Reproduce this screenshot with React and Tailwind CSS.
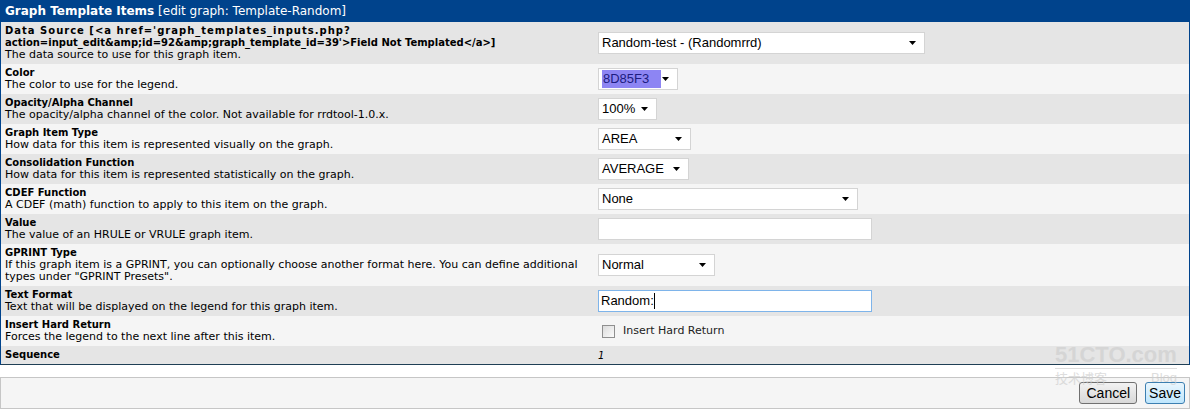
import React from "react";

const Arrow = () => (
  <svg width="7" height="4" viewBox="0 0 7 4" className="shrink-0">
    <path d="M0 0 L7 0 L3.5 4 Z" fill="#000" />
  </svg>
);

const FakeSelect = ({ value, width, highlight }) => (
  <div
    className={`h-[22px] ${width} bg-white border border-[#d4d4d4] flex items-center justify-between pl-[3px] pr-[8px] font-['Liberation_Sans'] text-[13px] text-black`}
  >
    {highlight ? (
      <span className="bg-[#8D85F3] text-[#1c1c80] pr-[12px] pl-[1px] leading-[18px]">{value}</span>
    ) : (
      <span className="leading-[18px]">{value}</span>
    )}
    <Arrow />
  </div>
);

const TextInput = ({ value, focused }) => (
  <div
    className={`h-[22px] w-[274px] bg-white border ${
      focused ? "border-[#7eb4ea]" : "border-[#d4d4d4]"
    } flex items-center pl-[2px] font-['Liberation_Sans'] text-[13px] text-black`}
  >
    {value}
    {focused && <span className="inline-block w-px h-[16px] bg-black" />}
  </div>
);

const rows = [
  {
    title: (
      <>
        <span className="tracking-[1px]">Data Source [&lt;a href='graph_templates_inputs.php?</span>
        <br />
        action=input_edit&amp;amp;id=92&amp;amp;graph_template_id=39'&gt;Field Not Templated&lt;/a&gt;]
      </>
    ),
    desc: "The data source to use for this graph item.",
    control: <FakeSelect value="Random-test - (Randomrrd)" width="w-[327px]" />,
  },
  {
    title: "Color",
    desc: "The color to use for the legend.",
    control: <FakeSelect value="8D85F3" width="w-[80px]" highlight />,
  },
  {
    title: "Opacity/Alpha Channel",
    desc: "The opacity/alpha channel of the color. Not available for rrdtool-1.0.x.",
    control: <FakeSelect value="100%" width="w-[59px]" />,
  },
  {
    title: "Graph Item Type",
    desc: "How data for this item is represented visually on the graph.",
    control: <FakeSelect value="AREA" width="w-[93px]" />,
  },
  {
    title: "Consolidation Function",
    desc: "How data for this item is represented statistically on the graph.",
    control: <FakeSelect value="AVERAGE" width="w-[91px]" />,
  },
  {
    title: "CDEF Function",
    desc: "A CDEF (math) function to apply to this item on the graph.",
    control: <FakeSelect value="None" width="w-[260px]" />,
  },
  {
    title: "Value",
    desc: "The value of an HRULE or VRULE graph item.",
    control: <TextInput value="" />,
  },
  {
    title: "GPRINT Type",
    desc: (
      <>
        If this graph item is a GPRINT, you can optionally choose another format here. You can define additional
        <br />
        types under "GPRINT Presets".
      </>
    ),
    control: <FakeSelect value="Normal" width="w-[117px]" />,
  },
  {
    title: "Text Format",
    desc: "Text that will be displayed on the legend for this graph item.",
    control: <TextInput value="Random:" focused />,
  },
  {
    title: "Insert Hard Return",
    desc: "Forces the legend to the next line after this item.",
    control: (
      <div className="flex items-center pl-[4px] gap-[8px]">
        <span className="w-[13px] h-[13px] border border-[#8f8f8f] bg-gradient-to-br from-[#dcdcdc] to-[#fbfbfb]" />
        <span className="text-[11px] text-[#222]">Insert Hard Return</span>
      </div>
    ),
  },
];

export default function App() {
  return (
    <div className="relative w-[1191px] h-[409px] bg-white font-['DejaVu_Sans',Verdana,sans-serif] text-black overflow-hidden">
      <div className="w-[1190px] border border-[#00438C] border-b-[#1f3f55]">
        <div className="h-[21px] bg-[#00438C] text-white text-[12px] leading-[21px] pl-[4px] flex items-center">
          <span className="font-bold">Graph Template Items</span>
          <span>&nbsp;[edit graph: Template-Random]</span>
        </div>
        {rows.map((r, i) => (
          <div
            key={i}
            className={`flex ${i % 2 === 0 ? "bg-[#e5e5e5]" : "bg-[#f5f5f5]"}`}
          >
            <div className="w-[593px] shrink-0 pl-[4px] py-[3px] leading-[12px]">
              <div className="font-bold text-[10px]">{r.title}</div>
              <div className="text-[11px]">{r.desc}</div>
            </div>
            <div className="flex items-center pl-[4px]">{r.control}</div>
          </div>
        ))}
        <div className="flex bg-[#e5e5e5] h-[18px] items-center">
          <div className="w-[593px] shrink-0 pl-[4px] text-[10px] leading-[12px] font-bold">Sequence</div>
          <div className="pl-[4px] text-[10px] italic">1</div>
        </div>
      </div>

      <div className="mt-[12px] w-[1190px] h-[32px] border border-[#c6c6c6] bg-[#f5f5f5] flex items-center justify-end gap-[8px] pr-[4px] font-['Liberation_Sans'] text-[14px]">
        <button className="h-[22px] px-[6px] rounded-[3px] border border-[#707070] bg-gradient-to-b from-[#f2f2f2] to-[#d8d8d8] text-black leading-none">
          Cancel
        </button>
        <button className="h-[22px] px-[3px] rounded-[3px] border border-[#3c7fb1] bg-gradient-to-b from-[#eaf6fd] to-[#bee6fd] text-black leading-none">
          Save
        </button>
      </div>

      <div className="absolute left-[1055px] top-[341px] pointer-events-none select-none text-[#cfcfcf] opacity-70">
        <div className="font-['Liberation_Sans'] font-bold text-[22px] leading-[27px]">51CTO.com</div>
        <div className="h-px bg-[#cfcfcf] w-[122px]" />
        <div className="font-['Noto_Sans_CJK_SC',sans-serif] text-[13px] leading-[18px] flex justify-between w-[122px]">
          <span>技术博客</span>
          <span className="font-['Liberation_Sans']">Blog</span>
        </div>
      </div>
    </div>
  );
}
